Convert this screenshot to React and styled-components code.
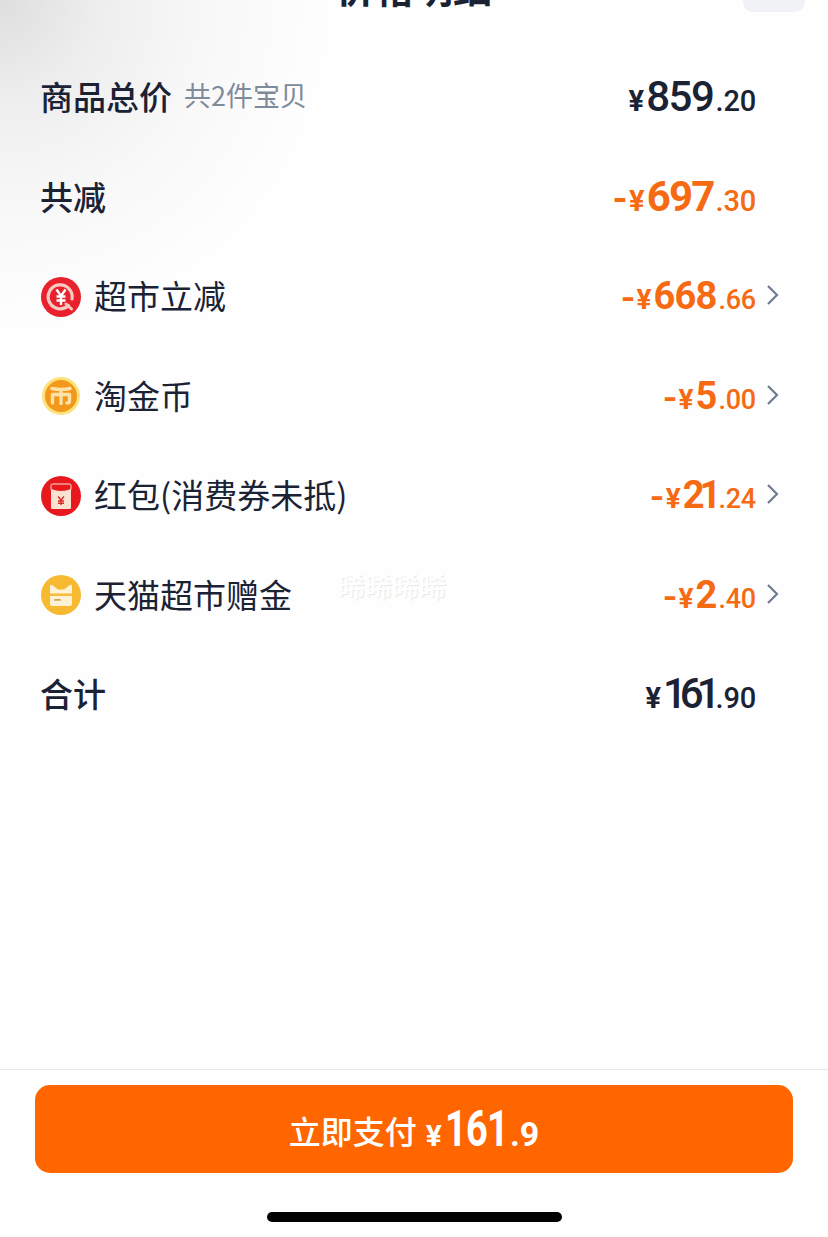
import React from "react";
import styled, { createGlobalStyle } from "styled-components";

const Global = createGlobalStyle`
  html, body { margin: 0; padding: 0; background: #fff; }
  * { box-sizing: border-box; }
`;
const CJK = `"Noto Sans CJK SC", "Noto Sans", sans-serif`;
const NUM = `Roboto, "Noto Sans", sans-serif`;

const Page = styled.div`
  position: relative;
  width: 828px;
  height: 1237px;
  overflow: hidden;
  display: flex;
  flex-direction: column;
  font-family: ${CJK};
  color: #1a2234;
  background:
    radial-gradient(circle at 0 0, #dedede 0, #eeeeee 100px, #f8f8f8 210px, #fefefe 330px, #fefefe 100%);
`;
const Header = styled.header`
  height: 46.5px;
  display: grid;
  grid-template-columns: 1fr auto 1fr;
  align-items: start;
`;
const Title = styled.h1`
  grid-column: 2;
  margin: -41px 0 0;
  font-size: 39px;
  line-height: 54px;
  font-weight: 700;
  color: #1a2234;
`;
const Close = styled.div`
  grid-column: 3;
  justify-self: end;
  width: 62px;
  height: 12px;
  margin-right: 23px;
  border-radius: 0 0 10px 10px;
  background: #f0f2f6;
`;
const List = styled.div`
  display: flex;
  flex-direction: column;
`;
const Row = styled.div`
  height: 99.5px;
  padding: 0 72px 0 40px;
  display: flex;
  align-items: center;
`;
const Label = styled.div`
  display: flex;
  align-items: center;
  gap: 14px;
  font-size: 33px;
  line-height: 44px;
  font-weight: ${(p) => (p.$strong ? 500 : 400)};
  white-space: nowrap;
`;
const Note = styled.span`
  font-size: 27px;
  font-weight: 400;
  color: #7f8a9b;
  position: relative;
  top: -1px;
  margin-left: -2px;
`;
const IconSlot = styled.svg`
  width: 40px;
  height: 40px;
  flex: none;
  margin: 3px -1px 0 1px;
`;
const Amount = styled.div`
  margin-left: auto;
  display: flex;
  align-items: baseline;
  font-family: ${NUM};
  color: ${(p) => (p.$accent ? "#f56a12" : "#1a2234")};
  white-space: nowrap;
  position: relative;
  top: 1px;
`;
const Minus = styled.span`
  font-size: ${(p) => p.$size + 6}px;
  font-weight: 700;
  margin-right: 1px;
  display: inline-block;
  transform: scaleX(1.1);
  transform-origin: right center;
`;
const Sign = styled.span`
  font-size: ${(p) => p.$size}px;
  font-weight: 700;
  margin-right: 2px;
`;
const Major = styled.span`
  font-size: ${(p) => p.$size}px;
  font-weight: ${(p) => p.$weight};
  letter-spacing: ${(p) => p.$track}px;
  line-height: 50px;
`;
const Minor = styled.span`
  font-size: ${(p) => p.$size}px;
  font-weight: 500;
  letter-spacing: -0.2px;
  margin-left: 2px;
`;
const Trail = styled.div`
  width: 0;
  overflow: visible;
  display: flex;
  align-items: center;
`;
const Chevron = styled.svg`
  flex: none;
  width: 14px;
  height: 22px;
  margin: 0 0 0 10px;
`;
const Watermark = styled.div`
  position: absolute;
  left: 338px;
  top: 567px;
  font-size: 27px;
  line-height: 38px;
  color: #fff;
  text-shadow: 1px 1px 1px #e6e6e6;
  font-weight: 500;
`;
const Footer = styled.footer`
  margin-top: auto;
  height: 168px;
  border-top: 1px solid #e8e8ea;
  padding: 15px 35px 0;
  display: flex;
  flex-direction: column;
  align-items: center;
`;
const PayButton = styled.button`
  width: 100%;
  height: 88px;
  border: 0;
  border-radius: 15px;
  background: #ff6600;
  color: #fff;
  font-family: ${CJK};
  display: flex;
  align-items: baseline;
  justify-content: center;
  padding: 14px 0 0 0;
  line-height: 60px;
`;
const PayText = styled.span`
  font-size: 32px;
  font-weight: 500;
  margin-right: 9px;
  position: relative;
  top: -2px;
`;
const PayYen = styled.span`
  font-family: ${NUM};
  font-size: 30px;
  font-weight: 700;
  margin-right: 3px;
`;
const PayMajor = styled.span`
  display: inline-block;
  font-family: ${NUM};
  font-size: 50px;
  font-weight: 700;
  letter-spacing: -1px;
  transform: scaleX(0.76);
  transform-origin: left center;
  margin-right: -19px;
`;
const PayMinor = styled.span`
  font-family: ${NUM};
  font-size: 34px;
  font-weight: 700;
  margin-left: 1px;
`;
const HomeBar = styled.div`
  width: 295px;
  height: 10px;
  margin-top: 39px;
  border-radius: 5px;
  background: #000;
`;

const RebateIcon = () => (
  <IconSlot viewBox="0 0 40 40">
    <circle cx="20" cy="20" r="20" fill="#e8212c" />
    <path d="M27.500 28.500A12 12 0 1 1 31 22" fill="none" stroke="#f8c9c0" strokeWidth="3.200" strokeLinecap="round" />
    <path d="M25 27l5.500 5" stroke="#f8c9c0" strokeWidth="3" strokeLinecap="round" />
    <path d="M15.500 12.500l4.500 6.500 4.500-6.500M20 19v9M15.500 19.500h9M15.500 23.500h9" fill="none" stroke="#fff" strokeWidth="2.400" />
  </IconSlot>
);
const CoinIcon = () => (
  <IconSlot viewBox="0 0 40 40">
    <circle cx="20" cy="20" r="19" fill="#fbe27c" />
    <circle cx="20" cy="20" r="16" fill="#f3981a" />
    <path d="M11 12.500c6 1.200 12 1.200 18 0M20 13.500v14M11.500 18.500h17M11.500 18.500v8.500M28.500 18.500v6.500q0 2-2.500 2" fill="none" stroke="#fde3a8" strokeWidth="3.400" strokeLinecap="round" />
  </IconSlot>
);
const PacketIcon = () => (
  <IconSlot viewBox="0 0 40 40">
    <circle cx="20" cy="20" r="20" fill="#e8181f" />
    <rect x="10" y="8" width="20" height="25" rx="1.500" fill="#fbe3d2" />
    <path d="M10 9.500q0-1.500 1.500-1.500h17q1.500 0 1.500 1.500v4q-10 4-20 0z" fill="#e8181f" stroke="#fbe3d2" strokeWidth="1" />
    <path d="M17 20.500l3 3.500 3-3.500M20 24v5M17 25h6M17 27.200h6" fill="none" stroke="#d92a25" strokeWidth="1.400" />
  </IconSlot>
);
const GiftIcon = () => (
  <IconSlot viewBox="0 0 40 40">
    <circle cx="20" cy="20" r="20" fill="#f6b92f" />
    <path d="M9 11q0-2 2-1l6 4.500h6l6-4.500q2-1 2 1V29q0 2-2 2H11q-2 0-2-2z" fill="#fdf3d4" />
    <rect x="9" y="18.500" width="22" height="2.400" fill="#f6b92f" />
    <rect x="13" y="24" width="7" height="1.800" rx=".9" fill="#c9a65a" />
  </IconSlot>
);

const rows = [
  { label: "商品总价", note: "共2件宝贝", strong: true, major: "859", minor: ".20", big: 42, small: 29, sign: 29, weight: 500, track: -1.4 },
  { label: "共减", strong: true, accent: true, minus: true, major: "697", minor: ".30", big: 42, small: 29, sign: 29, weight: 700, track: -1.8 },
  { label: "超市立减", Icon: RebateIcon, more: true, accent: true, minus: true, major: "668", minor: ".66", big: 38, small: 27, sign: 28, weight: 700, track: -0.8 },
  { label: "淘金币", Icon: CoinIcon, more: true, accent: true, minus: true, major: "5", minor: ".00", big: 38, small: 27, sign: 28, weight: 700, track: -0.8 },
  { label: "红包(消费券未抵)", Icon: PacketIcon, more: true, accent: true, minus: true, major: "21", minor: ".24", big: 38, small: 27, sign: 28, weight: 700, track: -5 },
  { label: "天猫超市赠金", Icon: GiftIcon, more: true, accent: true, minus: true, major: "2", minor: ".40", big: 38, small: 27, sign: 28, weight: 700, track: -0.8 },
  { label: "合计", strong: true, major: "161", minor: ".90", big: 42, small: 29, sign: 29, weight: 500, track: -7 },
];

export default function App() {
  return (
    <Page>
      <Global />
      <Header>
        <Title>价格明细</Title>
        <Close />
      </Header>
      <List>
        {rows.map(({ Icon, ...r }) => (
          <Row key={r.label}>
            <Label $strong={r.strong}>
              {Icon && <Icon />}
              {r.label}
              {r.note && <Note>{r.note}</Note>}
            </Label>
            <Amount $accent={r.accent}>
              {r.minus && <Minus $size={r.sign}>-</Minus>}
              <Sign $size={r.sign}>¥</Sign>
              <Major $size={r.big} $weight={r.weight} $track={r.track}>{r.major}</Major>
              <Minor $size={r.small}>{r.minor}</Minor>
            </Amount>
            <Trail>
              {r.more && (
                <Chevron viewBox="0 0 14 22">
                  <path d="M2 2l9 9-9 9" fill="none" stroke="#6f7c90" strokeWidth="2.200" />
                </Chevron>
              )}
            </Trail>
          </Row>
        ))}
      </List>
      <Watermark>晞晞晞晞</Watermark>
      <Footer>
        <PayButton>
          <PayText>立即支付</PayText>
          <PayYen>¥</PayYen>
          <PayMajor>161</PayMajor>
          <PayMinor>.9</PayMinor>
        </PayButton>
        <HomeBar />
      </Footer>
    </Page>
  );
}
